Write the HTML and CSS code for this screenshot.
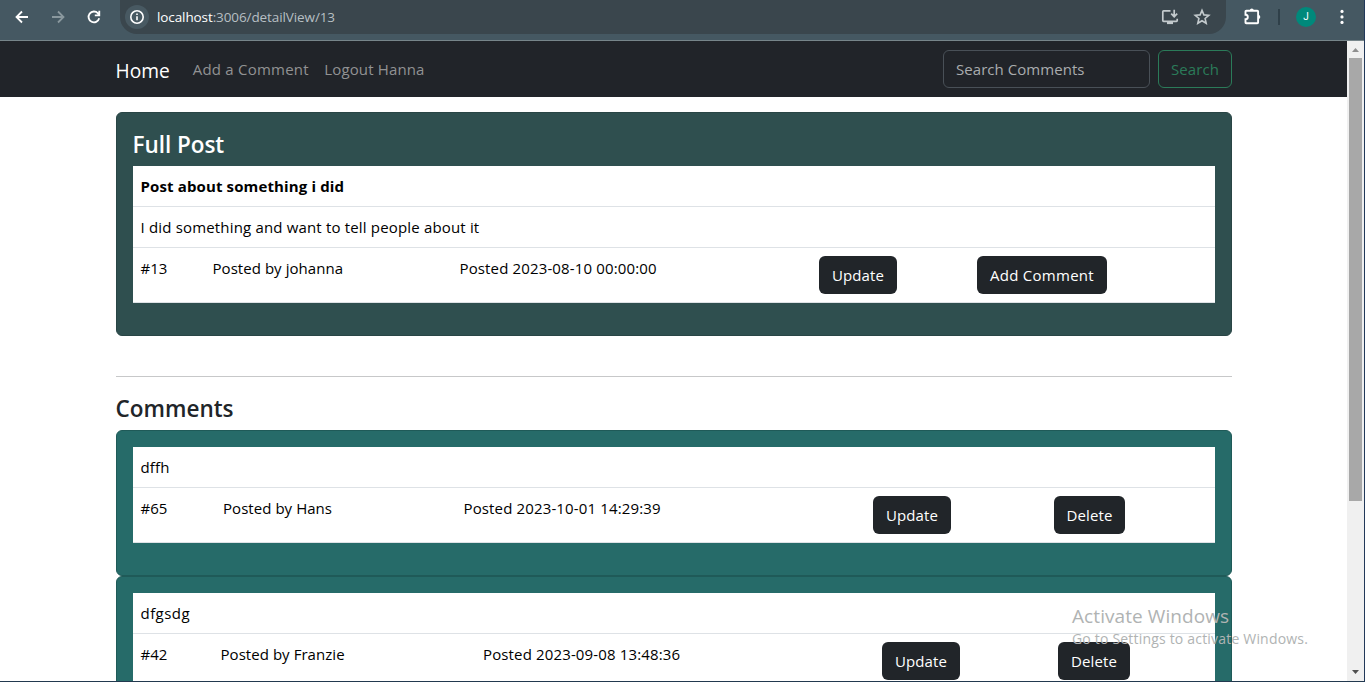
FILE: index.html
```
<!DOCTYPE html>
<html lang="en">
<head>
<meta charset="utf-8">
<title>Detail View</title>
<link rel="stylesheet" href="styles.css">
</head>
<body>
<div class="window">
  <header class="toolbar">
    <div class="nav-buttons">
      <svg width="16" height="16" viewBox="0 0 16 16" fill="none" stroke="#fff" stroke-width="1.8"><path d="M14 8H3M8 2.5 2.5 8 8 13.5"/></svg>
      <svg width="16" height="16" viewBox="0 0 16 16" fill="none" stroke="#8a989e" stroke-width="1.8"><path d="M2 8h11M8 2.5 13.500 8 8 13.500"/></svg>
      <svg width="16" height="16" viewBox="0 0 16 16" fill="none" stroke="#fff" stroke-width="1.8"><path d="M13.2 9.300A5.400 5.400 0 1 1 12 4.300L13 5.500M13.300 1.800V6.300H8.800"/></svg>
    </div>
    <div class="omnibox">
      <span class="info"><svg width="16" height="16" viewBox="0 0 16 16" fill="none" stroke="#fff" stroke-width="1.6"><circle cx="8" cy="8" r="6.2"/><path d="M8 7.2v4M8 4.4v1.7"/></svg></span>
      <span class="url"><b>localhost</b>:3006/detailView/13</span>
      <svg class="install" width="18" height="18" viewBox="0 0 18 18" fill="none" stroke="#c3cacd" stroke-width="1.7"><path d="M9.5 2.900H2.600a.8.8 0 0 0-.8.8v8.800c0 .5.3.8.8.8h12.800c.5 0 .8-.3.8-.8v-1.800M13.200 1.800v6.400M10.200 5.700l3 3 3-3"/><path d="M6 15h6" stroke-width="2.2"/></svg>
      <svg class="star" width="18" height="18" viewBox="0 0 18 18" fill="none" stroke="#c3cacd" stroke-width="1.6"><path d="m9 2.4 1.900 4.500 4.900.4-3.700 3.200 1.100 4.800L9 12.700l-4.200 2.600 1.100-4.800-3.700-3.200 4.900-.4z"/></svg>
    </div>
    <svg class="puzzle" width="19" height="18" viewBox="0 0 19 18" fill="none" stroke="#fff" stroke-width="1.9"><path d="M3.300 2.700h11c.5 0 .8.3.8.8v11c0 .5-.3.8-.8.8h-11c-.5 0-.8-.3-.8-.8v-3.200a2.300 2.300 0 0 0 0-4.600V3.500c0-.5.3-.8.8-.8z"/><path d="M6.900 2.200a1.900 1.700 0 0 1 3.800 0zM15.600 7a1.700 1.900 0 0 1 0 3.800z" fill="#fff" stroke="none"/></svg>
    <span class="divider"></span>
    <span class="avatar">J</span>
    <svg class="dots" width="4" height="16" viewBox="0 0 4 16" fill="#fff"><circle cx="2" cy="2.4" r="1.6"/><circle cx="2" cy="7.9" r="1.6"/><circle cx="2" cy="13.4" r="1.6"/></svg>
  </header>
  <div class="viewport">
    <div class="page">
      <nav class="navbar">
        <a class="brand">Home</a>
        <a class="link">Add a Comment</a>
        <a class="link">Logout Hanna</a>
        <div class="search">Search Comments</div>
        <button class="btn outline">Search</button>
      </nav>
      <main class="content">
        <section class="card post">
          <h4>Full Post</h4>
          <div class="table">
            <div class="row"><strong>Post about something i did</strong></div>
            <div class="row">I did something and want to tell people about it</div>
            <div class="row cells first">
              <div>#13</div><div>Posted by johanna</div><div class="date">Posted 2023-08-10 00:00:00</div><div><button class="btn">Update</button></div><div><button class="btn wide">Add Comment</button></div>
            </div>
          </div>
        </section>
        <hr>
        <h4 class="comments">Comments</h4>
        <section class="card">
          <div class="table">
            <div class="row">dffh</div>
            <div class="row cells second">
              <div>#65</div><div>Posted by Hans</div><div class="date">Posted 2023-10-01 14:29:39</div><div><button class="btn">Update</button></div><div><button class="btn del">Delete</button></div>
            </div>
          </div>
        </section>
        <section class="card">
          <div class="table">
            <div class="row title-wide">dfgsdg</div>
            <div class="row cells third">
              <div>#42</div><div>Posted by Franzie</div><div class="date">Posted 2023-09-08 13:48:36</div><div><button class="btn">Update</button></div><div><button class="btn del">Delete</button></div>
            </div>
          </div>
        </section>
      </main>
    </div>
    <div class="scrollbar">
      <svg width="15" height="17" viewBox="0 0 15 17"><path d="M4 11h7L7.500 7z" fill="#8f8f8f"/></svg>
      <span class="thumb"></span>
      <svg class="down" width="15" height="17" viewBox="0 0 15 17"><path d="M4 6h7l-3.500 4z" fill="#505050"/></svg>
    </div>
  </div>
  <div class="watermark"><p>Activate Windows</p><small>Go to Settings to activate Windows.</small></div>
</div>
</body>
</html>
```
FILE: styles.css
```
* { box-sizing: border-box; }
body { margin: 0; font: 15px/24px "Open Sans", sans-serif; color: #000; }
.window { position: relative; height: 682px; overflow: hidden; display: flex; flex-direction: column; border-bottom: 1px solid #22394f; border-right: 1px solid #22395a; background: #fff; }
.toolbar { flex: none; height: 41px; background: #455862; border-bottom: 1px solid #77858a; display: flex; align-items: flex-start; }
.nav-buttons { display: flex; gap: 20px; padding: 9px 0 0 14px; width: 120px; }
.omnibox { width: 1106px; height: 34px; background: #3a464d; border-radius: 0 0 17px 17px; display: flex; align-items: center; padding: 0 15px 0 5px; }
.info { width: 24px; height: 24px; border-radius: 50%; background: #485962; display: grid; place-items: center; margin-right: 8px; }
.url { font: 13.5px/20px "Open Sans", sans-serif; letter-spacing: -0.1px; color: #b7bfc3; }
.url b { font-weight: 400; color: #fff; }
.install { margin-left: auto; margin-right: 14px; }
.puzzle { margin: 8px 0 0 17px; }
.divider { width: 2px; height: 16px; margin: 9px 0 0 16px; background: #2f4049; }
.avatar { width: 20px; height: 20px; margin: 7px 0 0 16px; border-radius: 50%; background: #00897b; color: #fff; font: 10px/20px Roboto, sans-serif; text-align: center; }
.dots { margin: 9px 0 0 24px; }
.viewport { flex: 1; min-height: 0; display: flex; }
.page { flex: 1; overflow: hidden; }
.navbar { height: 56px; background: #212429; display: flex; align-items: center; padding: 0 115px 0 115.5px; color: #919293; }
.brand { font-size: 19.2px; color: #fff; margin: 3px 23px 0 0; }
.link { margin-right: 15.5px; letter-spacing: 0.22px; }
.link + .link { letter-spacing: 0.14px; }
.search { width: 207px; height: 38px; margin-left: auto; margin-right: 8px; border: 1px solid #495057; border-radius: 6px; padding: 6px 12px; color: #a9acae; letter-spacing: 0.05px; }
.btn { height: 38px; width: 78px; border: 0; border-radius: 6px; background: #212529; color: #fff; font: inherit; letter-spacing: 0.1px; padding: 0; display: block; }
.wide { width: 130px; letter-spacing: 0.26px; }
.del { width: 71px; }
.third .del { width: 72px; }
.outline { width: 74px; border: 1px solid #2b7b59; background: none; color: #2b7b59; }
.content { padding: 15px 115px 0 116px; }
.card { background: #266b69; border: 1px solid #1f5a58; border-radius: 6px; padding: 16px 16px 32px; }
.post { background: #2f4f4f; border-color: #294545; }
h4 { margin: 0 0 7px -0.5px; padding-top: 1px; font-size: 22.5px; line-height: 29px; font-weight: 600; }
.post h4 { color: #fff; letter-spacing: -0.04px; }
.comments { color: #212529; }
hr { border: 0; border-top: 1px solid #c7c8c9; margin: 40px 0 16px; }
.table { background: #fff; }
.row { height: 41px; padding: 8px 8px 8px 7.5px; border-bottom: 1px solid #dee2e6; white-space: nowrap; letter-spacing: 0.17px; }
.row strong { letter-spacing: 0.13px; }
.title-wide { letter-spacing: 0.45px; }
.cells { height: 55px; display: grid; padding-left: 8px; letter-spacing: 0.05px; }
.cells > :first-child { margin-left: -0.5px; }
.date { letter-spacing: 0.14px; }
.first { grid-template-columns: 71.5px 247px 359.5px 158px 1fr; }
.second { grid-template-columns: 82px 240.5px 409.5px 181px 1fr; }
.third { grid-template-columns: 79.5px 262.5px 399px 176px 1fr; }
.scrollbar { width: 17px; background: #f0f0f0; display: flex; flex-direction: column; padding-left: 1px; }
.thumb { width: 13px; height: 443px; margin-left: 1px; background: #a8a8a8; }
.down { margin-top: auto; }
.watermark { position: absolute; left: 1072px; top: 604px; color: #b0b3b3; white-space: nowrap; }
.watermark p { margin: 0; font-size: 19px; line-height: 24px; letter-spacing: 0.08px; }
.watermark small { font-size: 14px; line-height: 22px; letter-spacing: 0.19px; display: block; }
```
